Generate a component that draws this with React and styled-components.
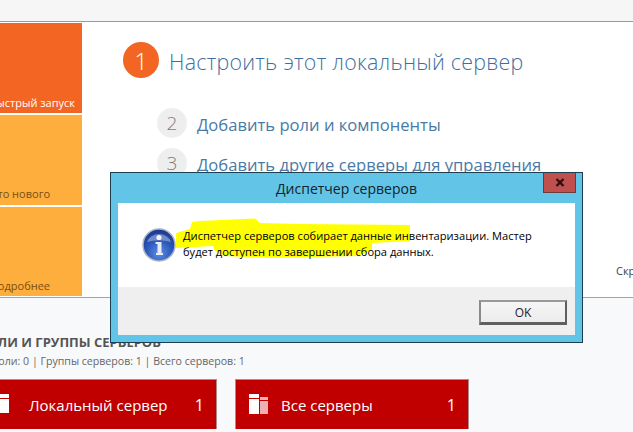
import React from "react";
import styled, { createGlobalStyle } from "styled-components";

const Global = createGlobalStyle`
  html, body { margin: 0; padding: 0; background: #fff; }
  body { font-family: "Open Sans", "Noto Sans", "Liberation Sans", sans-serif; }
`;

const Page = styled.div`
  position: relative;
  width: 633px;
  height: 432px;
  overflow: hidden;
  display: flex;
  flex-direction: column;
  background: #fff;
`;

const TopBar = styled.div`
  height: 21px;
  flex: none;
  background: #f6f6f6;
  border-bottom: 1px solid #9a9a9a;
  overflow: hidden;
`;

const TopText = styled.div`
  margin: -24px 0 0 14px;
  font-size: 18px;
  line-height: 24px;
  color: #555;
  white-space: nowrap;
  letter-spacing: 0.6px;
`;

const Upper = styled.div`
  height: 275px;
  flex: none;
  display: flex;
  background: #fff;
  border-bottom: 1px solid #a3a3a3;
`;

const Tiles = styled.div`
  width: 82px;
  flex: none;
  padding-top: 1px;
  display: flex;
  flex-direction: column;
  gap: 2px;
`;

const Tile = styled.div`
  height: ${(p) => p.$h}px;
  background: ${(p) => p.$bg};
  color: ${(p) => p.$fg};
  font-size: 11px;
  line-height: 15px;
  display: flex;
  align-items: flex-end;
  justify-content: flex-end;
  padding: 0 ${(p) => p.$right}px ${(p) => p.$bottom}px 0;
  box-sizing: border-box;
  white-space: nowrap;
  overflow: hidden;
`;

const TileLabel = styled.span`
  flex: none;
`;

const Steps = styled.div`
  flex: 1;
  padding: 20px 0 0 41px;
  display: flex;
  flex-direction: column;
  position: relative;
`;

const MainStep = styled.div`
  display: flex;
  align-items: center;
  gap: 10px;
  height: 36px;
  margin-bottom: 30px;
`;

const MainNumber = styled.div`
  width: 36px;
  height: 36px;
  border-radius: 50%;
  background: #f26522;
  color: #fff;
  font-size: 24px;
  font-weight: 300;
  display: flex;
  align-items: center;
  justify-content: center;
`;

const MainTitle = styled.div`
  font-size: 21.4px;
  font-weight: 300;
  color: #3e6f9e;
  white-space: nowrap;
  letter-spacing: 0.25px;
  padding-top: 2px;
`;

const SubStep = styled.div`
  display: flex;
  align-items: center;
  gap: 10px;
  height: 30px;
  margin: 0 0 10px 34px;
`;

const SubNumber = styled.div`
  width: 30px;
  height: 30px;
  border-radius: 50%;
  background: #eeeeee;
  color: #7d7d7d;
  font-size: 19px;
  font-weight: 300;
  display: flex;
  align-items: center;
  justify-content: center;
`;

const SubTitle = styled.div`
  font-size: 16.6px;
  font-weight: 400;
  color: #4a79a6;
  white-space: nowrap;
  padding-top: 2px;
`;

const SideNote = styled.div`
  position: absolute;
  left: 534px;
  top: 241px;
  font-size: 11px;
  line-height: 15px;
  color: #444;
`;

const Lower = styled.div`
  flex: 1;
  background: #f8f9fa;
  padding-top: 36px;
`;

const GroupTitle = styled.div`
  margin-left: -21px;
  font-size: 13px;
  line-height: 17px;
  font-weight: 700;
  color: #555;
  white-space: nowrap;
`;

const GroupInfo = styled.div`
  margin: 2px 0 0 -8px;
  font-size: 10.6px;
  line-height: 16px;
  color: #666;
  white-space: nowrap;
`;

const Cards = styled.div`
  display: flex;
  gap: 18px;
  margin: 10px 0 0 -17px;
`;

const Card = styled.div`
  width: 234px;
  height: 50px;
  box-sizing: border-box;
  background: #c00000;
  border: 1px solid #b08a8a;
  border-bottom: none;
  color: #fff;
  display: flex;
  align-items: center;
  padding: 0 12px 0 13px;
  font-size: 15px;
  flex: none;
`;

const CardIcon = styled.svg`
  width: 20px;
  height: 21px;
  flex: none;
  margin: 0 12px 0 0;
`;

const CardName = styled.span`
  flex: 1;
  font-weight: 400;
  white-space: nowrap;
`;

const CardCount = styled.span`
  font-weight: 400;
  font-size: 16px;
`;

const Dialog = styled.div`
  position: absolute;
  left: 110px;
  top: 172px;
  width: 473px;
  height: 171px;
  box-sizing: border-box;
  background: #62c5e8;
  border: 1px solid #1d3f52;
  display: flex;
  flex-direction: column;
  padding: 0 7px 7px;
`;

const TitleBar = styled.div`
  position: relative;
  height: 30px;
  flex: none;
  display: flex;
  align-items: center;
  justify-content: center;
  font-size: 14px;
  color: #10232e;
  padding-top: 1px;
  box-sizing: border-box;
`;

const CloseButton = styled.div`
  position: absolute;
  right: -1px;
  top: 0;
  width: 33px;
  height: 20px;
  box-sizing: border-box;
  background: #c0504d;
  border: 1px solid #6e3a38;
  border-top: none;
  display: flex;
  align-items: center;
  justify-content: center;
`;

const DialogBody = styled.div`
  flex: 1;
  background: #fff;
  display: flex;
  flex-direction: column;
`;

const Message = styled.div`
  position: relative;
  height: 84px;
  flex: none;
  padding: 25px 0 0 65px;
  box-sizing: border-box;
`;

const Highlight = styled.svg`
  position: absolute;
  left: 0;
  top: 0;
  width: 455px;
  height: 84px;
`;

const InfoIcon = styled.svg`
  position: absolute;
  left: 24px;
  top: 25px;
  width: 34px;
  height: 34px;
`;

const MessageText = styled.div`
  position: relative;
  width: 380px;
  font-size: 11.1px;
  line-height: 16px;
  color: #000;
`;

const Footer = styled.div`
  flex: 1;
  background: #efefef;
  display: flex;
  justify-content: flex-end;
  align-items: flex-start;
  padding: 13px 8px 0 0;
`;

const OkButton = styled.div`
  width: 88px;
  height: 25px;
  box-sizing: border-box;
  background: linear-gradient(#f6f6f6, #ececec);
  border: 2px solid #8a8a8a;
  border-top-color: #9a9a9a;
  border-right-color: #5f5f5f;
  border-bottom: 3px solid #5f5f5f;
  font-size: 12px;
  color: #222;
  display: flex;
  align-items: center;
  justify-content: center;
`;

export default function App() {
  return (
    <Page>
      <Global />
      <TopBar>
        <TopText>Диспетчер серверов • Панель мониторинга</TopText>
      </TopBar>
      <Upper>
        <Tiles>
          <Tile $h={90} $bg="#f26522" $fg="#fff" $right={7} $bottom={3}><TileLabel>Быстрый запуск</TileLabel></Tile>
          <Tile $h={90} $bg="#fdae3c" $fg="#7a4f12" $right={32} $bottom={4}><TileLabel>Что нового</TileLabel></Tile>
          <Tile $h={89} $bg="#fdae3c" $fg="#7a4f12" $right={32} $bottom={3}><TileLabel>Подробнее</TileLabel></Tile>
        </Tiles>
        <Steps>
          <MainStep>
            <MainNumber>1</MainNumber>
            <MainTitle>Настроить этот локальный сервер</MainTitle>
          </MainStep>
          <SubStep>
            <SubNumber>2</SubNumber>
            <SubTitle>Добавить роли и компоненты</SubTitle>
          </SubStep>
          <SubStep>
            <SubNumber>3</SubNumber>
            <SubTitle>Добавить другие серверы для управления</SubTitle>
          </SubStep>
          <SideNote>Скрыть</SideNote>
        </Steps>
      </Upper>
      <Lower>
        <GroupTitle>РОЛИ И ГРУППЫ СЕРВЕРОВ</GroupTitle>
        <GroupInfo>Роли: 0 | Группы серверов: 1 | Всего серверов: 1</GroupInfo>
        <Cards>
          <Card>
            <CardIcon viewBox="0 0 20 21">
              <rect x="3" y="0" width="9" height="4" fill="#fff" />
              <rect x="3" y="5" width="9" height="14" fill="#fff" />
            </CardIcon>
            <CardName>Локальный сервер</CardName>
            <CardCount>1</CardCount>
          </Card>
          <Card>
            <CardIcon viewBox="0 0 20 21">
              <rect x="0" y="0" width="10" height="4" fill="#fff" />
              <rect x="0" y="5" width="10" height="15" fill="#fff" />
              <rect x="11" y="3" width="8" height="3" fill="#eeb0b0" />
              <rect x="11" y="7" width="8" height="13" fill="#eeb0b0" />
            </CardIcon>
            <CardName>Все серверы</CardName>
            <CardCount>1</CardCount>
          </Card>
        </Cards>
      </Lower>
      <Dialog>
        <TitleBar>
          Диспетчер серверов
          <CloseButton>
            <svg width="10" height="9" viewBox="0 0 10 9">
              <path d="M1.5 1 L8.5 8 M8.5 1 L1.5 8" stroke="#2a1010" strokeWidth="2.4" />
            </svg>
          </CloseButton>
        </TitleBar>
        <DialogBody>
          <Message>
            <Highlight viewBox="0 0 455 84">
              <path
                d="M74 19 L82 18 L137 15.5 L142 20 L182 21 L292 22 L292 38 L254 40 L254 47 L240 53 L152 55 L107 53 L97 48 L95 43 L58 45 L58 30 L72 26 Z"
                fill="#ffff00"
              />
            </Highlight>
            <InfoIcon viewBox="0 0 34 34">
              <defs>
                <radialGradient id="infoBlue" cx="50%" cy="75%" r="70%">
                  <stop offset="0%" stopColor="#5b8fe6" />
                  <stop offset="60%" stopColor="#2a55b8" />
                  <stop offset="100%" stopColor="#1c3a90" />
                </radialGradient>
              </defs>
              <circle cx="17" cy="17" r="16" fill="url(#infoBlue)" stroke="#a9b4c6" strokeWidth="1.5" />
              <path d="M5 14 A12.5 11 0 0 1 29 14 A24 12 0 0 0 5 14 Z" fill="#fff" opacity="0.35" />
              <circle cx="17" cy="9.5" r="2.6" fill="#f2f4f8" />
              <path d="M13.5 14 H19.5 V25 H21 V27 H14 V25 H15.5 V16 H13.5 Z" fill="#e8ebf2" />
            </InfoIcon>
            <MessageText>
              Диспетчер серверов собирает данные инвентаризации. Мастер
              <br />
              будет доступен по завершении сбора данных.
            </MessageText>
          </Message>
          <Footer>
            <OkButton>OK</OkButton>
          </Footer>
        </DialogBody>
      </Dialog>
    </Page>
  );
}
